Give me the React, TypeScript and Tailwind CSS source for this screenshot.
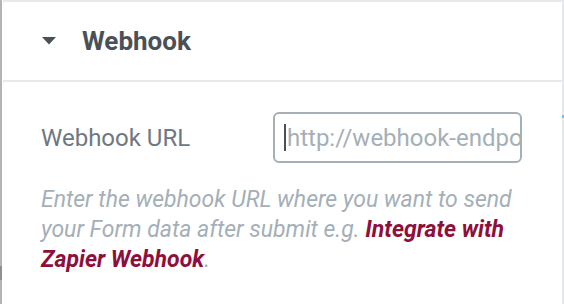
export default function App() {
  return (
    <div
      className="relative h-[304px] w-[564px] overflow-hidden bg-white"
      style={{ fontFamily: "Roboto, 'Liberation Sans', sans-serif" }}
    >
      <div className="flex h-full">
        {/* left edge */}
        <div className="flex w-[3px] flex-col">
          <div className="h-[266px] w-[2px] bg-[#b4b4b4]" />
          <div className="h-[14px] w-[2px] bg-[#8f8f8f]" />
          <div className="flex-1 w-[2px] bg-[#b4b4b4]" />
        </div>

        <div className="flex flex-1 flex-col">
          <div className="h-[2px] bg-[#e6e9ec]" />

          {/* section header */}
          <div className="flex h-[78px] items-center pl-[39px]">
            <svg width="14" height="8" viewBox="0 0 14 8" className="mr-[26px]">
              <path d="M0 0 H14 L7 7.5 Z" fill="#495157" />
            </svg>
            <span className="text-[26px] font-bold text-[#495157]">Webhook</span>
          </div>
          <div className="h-[2px] bg-[#e6e9ec]" />

          {/* control */}
          <div className="flex flex-col pl-[38px] pr-[30px] pt-[30px]">
            <div className="flex items-center">
              <label className="w-[232px] text-[24px] text-[#6d7882]">Webhook URL</label>
              <div className="flex h-[51px] w-[249px] items-center rounded-[6px] border-2 border-[#a4afb7] pl-[9px]">
                <span className="mr-[1px] h-[27px] w-[2px] bg-[#495157]" />
                <input
                  className="w-full bg-transparent text-[24px] text-[#495157] outline-none placeholder:text-[#a4afb7]"
                  placeholder="http://webhook-endpoint.com"
                />
              </div>
            </div>

            <p className="mt-[22px] text-[23px] leading-[30px] italic text-[#a4afb7]">
              Enter the webhook URL where you want to send your Form data after submit e.g.{" "}
              <a className="font-bold text-[#8f0f3c]">Integrate with Zapier Webhook</a>.
            </p>
          </div>
        </div>

        {/* right edge */}
        <div className="flex w-[2px] flex-col bg-[#e6e9ec]">
          <div className="h-[115px]" />
          <div className="h-[3px] bg-[#71c6e8]" />
        </div>
      </div>
    </div>
  );
}
